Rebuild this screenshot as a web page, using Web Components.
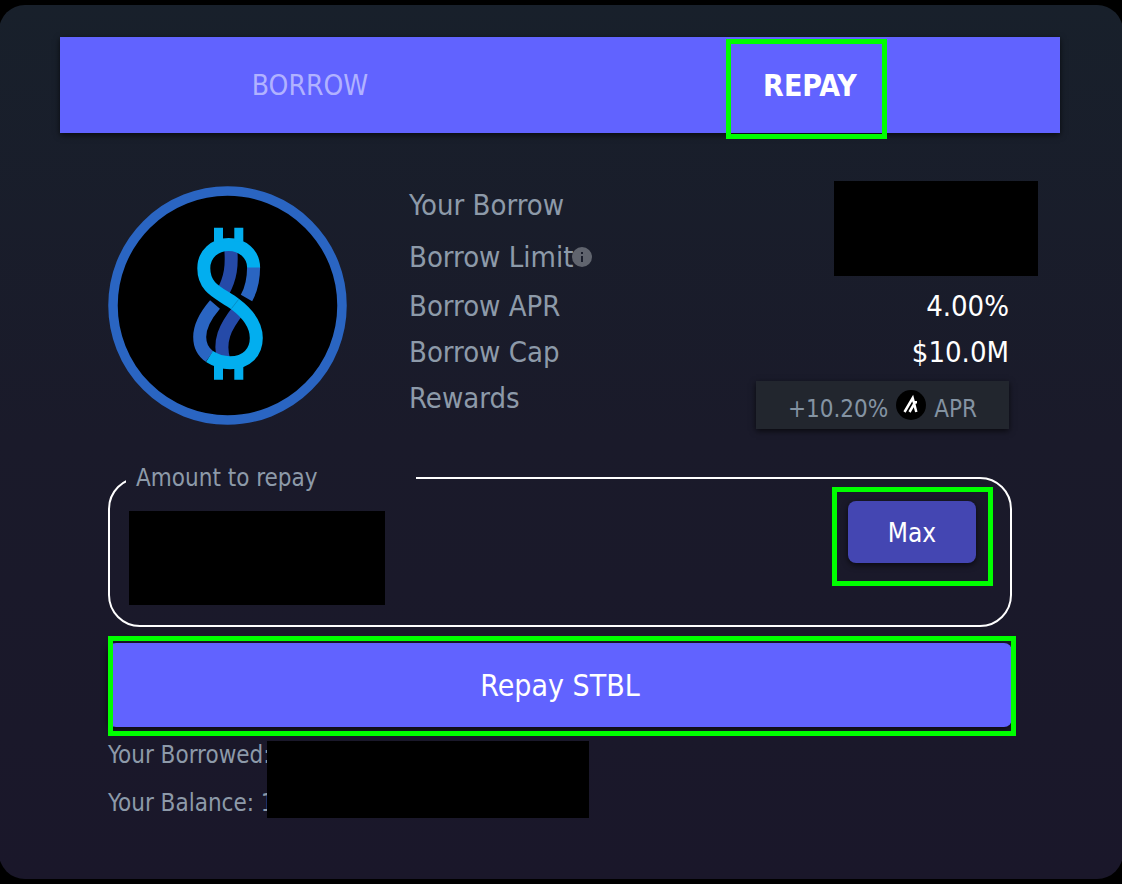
<!DOCTYPE html>
<html lang="en">
<head>
<meta charset="utf-8">
<meta name="viewport" content="width=device-width, initial-scale=1">
<title>Repay STBL</title>
<style>
  html { background: #000; }
  body {
    margin: 0; overflow-x: hidden;
    font-family: "DejaVu Sans Condensed", "DejaVu Sans", sans-serif;
    font-size: 29px; line-height: 34px; color: #8d9aa9;
  }
</style>
</head>
<body>
<loan-card>
  <tab-bar slot="tabs"></tab-bar>
  <market-summary>
    <stbl-logo slot="logo"></stbl-logo>
  </market-summary>
  <amount-field label="Amount to repay"></amount-field>
  <submit-button>Repay STBL</submit-button>
  <balance-notes></balance-notes>
</loan-card>

<script>
const define = (name, html) => customElements.define(name, class extends HTMLElement {
  constructor() {
    super();
    this.attachShadow({ mode: 'open' }).innerHTML =
      html.replace('{label}', this.getAttribute('label') || '');
  }
});

/* Bright frame that calls attention to the control it surrounds */
define('highlight-frame', `
<style>
  :host { display: block; position: absolute; inset: var(--frame-inset, -8px); border: 5px solid #0f0; box-sizing: border-box; pointer-events: none; }
</style>`);

/* Opaque block that hides a private value */
define('redacted-block', `
<style>
  :host { display: block; position: absolute; background: #000; }
</style>`);

define('loan-card', `
<style>
  :host {
    display: block; box-sizing: border-box; margin: 5px -1px; padding: 32px 63px 36px 61px;
    min-height: calc(100vh - 10px);
    border-radius: 26px; background: linear-gradient(#18202b, #1a1a2a 50%, #1a172a);
  }
  main { padding: 0 48px; }
</style>
<slot name="tabs"></slot>
<main><slot></slot></main>`);

define('tab-bar', `
<style>
  :host { display: block; background: #6163ff; box-shadow: 0 2px 6px #000a; }
  nav { display: grid; grid-template-columns: 1fr 1fr; justify-items: center; height: 96px; }
  button { position: relative; border: 0; padding: 2px 33px 0; background: none; font: inherit; font-size: 28px; color: #b1b2ff; cursor: pointer; }
  button[aria-selected=true] { color: #fff; font-size: 30px; font-weight: bold; }
  highlight-frame { --frame-inset: 2px 3px -6px -4px; }
</style>
<nav role="tablist">
  <button role="tab" aria-selected="false">BORROW</button>
  <button role="tab" aria-selected="true">REPAY<highlight-frame></highlight-frame></button>
</nav>`);

define('stbl-logo', `
<style>
  :host { display: block; }
  svg { display: block; width: 240px; height: 240px; }
</style>
<svg viewBox="0 0 240 240" role="img" aria-label="STBL" fill="none">
  <circle cx="119.500" cy="119.500" r="114.500" fill="#000" stroke="#2a65c2" stroke-width="9.500"/>
  <g stroke-width="13">
    <path d="M122.500 60 C124.500 80 122.500 92 115 106 M130.500 124 C117 141 110 155 116 175" stroke="#254aa8"/>
    <path d="M145.600 81 C145.600 93 143.500 103 138.500 112 M107 118.500 C98 129 91.700 139 91.700 151 C91.700 160 95 166 101.500 170.500" stroke="#2a65c2"/>
    <path d="M145.600 81.500 C145.600 68 134 58.500 120.700 58.500 C107 58.500 95.800 68 95.800 82.300 C95.800 103 112 107 127 118 C139 127 148.300 138 148.300 152 C148.300 166 139 176.700 122 176.700 C114 176.700 107 174 101.500 170.500" stroke="#02aeef"/>
  </g>
  <path d="M106 41.700h9v14h-9zM126.300 41.700h9v14h-9zM106 179.700h9v14h-9zM126.300 179.700h9v14h-9z" fill="#02aeef"/>
  <path d="M130.500 113.500L123.500 122.500" stroke="#0a6d9a" stroke-width=".5"/>
</svg>`);

define('info-icon', `
<style>
  :host { display: inline-block; vertical-align: middle; width: 20px; height: 20px; margin: -4px 0 0 -1px; }
  svg { display: block; }
</style>
<svg width="20" height="20" viewBox="0 0 20 20" role="img" aria-label="More information">
  <circle cx="10" cy="10" r="10" fill="#60646e"/>
  <path d="M9 5h2v2H9zM9 9h2v6H9z" fill="#191d2b"/>
</svg>`);

define('reward-badge', `
<style>
  :host {
    display: flex; align-items: center; justify-content: center; gap: 8px;
    box-sizing: border-box; width: 253px; height: 48px; padding-top: 8px;
    background: #22262e; box-shadow: 0 2px 6px #000a;
    font-size: 24px; color: #8493a2;
  }
  svg { flex: none; margin-bottom: 8px; }
</style>
<span>+10.20%</span>
<svg width="30" height="30" viewBox="0 0 30 30" role="img" aria-label="Algorand">
  <circle cx="15" cy="15" r="15" fill="#000"/>
  <path d="M8.500 22 L16.700 8 L20.300 22 M13.500 22 L19 12.500 M17 12.200 H21" fill="none" stroke="#fff" stroke-width="2.500"/>
</svg>
<span>APR</span>`);

define('market-summary', `
<style>
  :host { display: grid; grid-template-columns: 240px 1fr; column-gap: 61px; padding-top: 45px; }
  slot { display: block; padding-top: 8px; }
  dl { margin: 0; padding-top: 1px; position: relative; }
  div { display: flex; justify-content: space-between; align-items: center; height: 46px; padding-right: 3px; }
  div.tall { height: 52px; }
  dt { white-space: nowrap; }
  dd { margin: 0; color: #fff; }
  div.rewards dd { align-self: flex-start; padding-top: 6px; }
  redacted-block { top: 3px; right: -26px; width: 204px; height: 95px; }
</style>
<slot name="logo"></slot>
<dl>
  <div class="tall"><dt>Your Borrow</dt><dd></dd></div>
  <div class="tall"><dt>Borrow Limit<info-icon></info-icon></dt><dd></dd></div>
  <div><dt>Borrow APR</dt><dd>4.00%</dd></div>
  <div><dt>Borrow Cap</dt><dd>$10.0M</dd></div>
  <div class="rewards"><dt>Rewards</dt><dd><reward-badge></reward-badge></dd></div>
  <redacted-block></redacted-block>
</dl>`);

define('amount-field', `
<style>
  :host { display: block; margin-top: 38px; }
  fieldset {
    display: flex; justify-content: space-between; align-items: flex-start;
    box-sizing: border-box; min-width: 0; height: 163px; margin: 0; padding: 0 34px 0 19px;
    border: 2px solid #fff; border-radius: 32px;
  }
  legend { box-sizing: border-box; width: 290px; margin-left: -3px; padding: 0 10px; font-size: 24px; line-height: 28px; }
  input { box-sizing: border-box; width: 256px; height: 94px; margin-top: 19px; border: 0; padding: 0 12px; background: #000; color: #000; font: inherit; }
  .max { position: relative; margin-top: 9px; }
  button { display: block; width: 128px; height: 62px; border: 0; border-radius: 8px; padding: 2px 0 0; background: #4446b2; color: #fff; font: inherit; font-size: 26px; box-shadow: 0 2px 6px #000a; }
  highlight-frame { --frame-inset: -14px -17px -23px -16px; }
</style>
<fieldset>
  <legend><label for="amount">{label}</label></legend>
  <input id="amount" type="text" inputmode="decimal">
  <span class="max"><button type="button">Max</button><highlight-frame></highlight-frame></span>
</fieldset>`);

define('submit-button', `
<style>
  :host { display: block; position: relative; margin-top: 16px; }
  button { display: block; width: 100%; height: 84px; border: 0; border-radius: 8px; padding-top: 2px; background: #6163ff; color: #fff; font: inherit; font-size: 30px; box-shadow: 0 2px 6px #000a; }
  highlight-frame { --frame-inset: -7px -4px -9px 0; }
</style>
<button type="button"><slot></slot></button>
<highlight-frame></highlight-frame>`);

define('balance-notes', `
<style>
  :host { display: block; position: relative; padding-top: 12px; font-size: 24px; line-height: 32px; }
  p { margin: 0 0 16px; }
  redacted-block { left: 159px; top: 14px; width: 322px; height: 77px; }
</style>
<p>Your Borrowed:</p>
<p>Your Balance: 1</p>
<redacted-block></redacted-block>`);
</script>
</body>
</html>
